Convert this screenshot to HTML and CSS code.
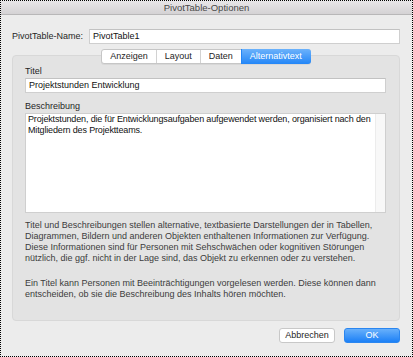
FILE: index.html
```html
<!DOCTYPE html>
<html>

<head>
    <title>PivotTable-Optionen</title>
    <link rel="stylesheet" href="styles.css">
</head>

<body>
    <div class="window">
        <div class="titlebar">PivotTable-Optionen</div>
        <div class="content">
            <div class="name-row">
                <span class="label">PivotTable-Name:</span>
                <div class="field name-field">PivotTable1</div>
            </div>

            <div class="tabs">
                <span class="tab">Anzeigen</span>
                <span class="tab">Layout</span>
                <span class="tab">Daten</span>
                <span class="tab active">Alternativtext</span>
            </div>

            <div class="panel">
                <div class="label">Titel</div>
                <div class="field title-field">Projektstunden Entwicklung</div>

                <div class="label desc-label">Beschreibung</div>
                <div class="textarea">
                    <div class="textarea-text">Projektstunden, die für Entwicklungsaufgaben aufgewendet werden, organisiert nach den Mitgliedern des Projektteams.</div>
                    <div class="scroll-track"></div>
                </div>

                <p class="hint">Titel und Beschreibungen stellen alternative, textbasierte Darstellungen der in Tabellen, Diagrammen, Bildern und anderen Objekten enthaltenen Informationen zur Verfügung. Diese Informationen sind für Personen mit Sehschwächen oder kognitiven Störungen nützlich, die ggf. nicht in der Lage sind, das Objekt zu erkennen oder zu verstehen.</p>
                <p class="hint second">Ein Titel kann Personen mit Beeinträchtigungen vorgelesen werden. Diese können dann entscheiden, ob sie die Beschreibung des Inhalts hören möchten.</p>
            </div>

            <div class="buttons">
                <button class="btn">Abbrechen</button>
                <button class="btn primary">OK</button>
            </div>
        </div>
    </div>
</body>

</html>
```

FILE: styles.css
```css
body {
    margin: 0;
    font-family: 'Liberation Sans', Arial, sans-serif;
    font-size: 9px;
    color: #262626;
}

.window {
    width: 413px;
    height: 357px;
    box-sizing: border-box;
    border: 1px dotted #000;
    background-color: #ececec;
}

.titlebar {
    height: 13px;
    line-height: 13px;
    text-align: center;
    font-size: 9.5px;
    color: #4a4a4a;
    background: linear-gradient(#e8e6e8, #d4d2d4);
    border-bottom: 1px solid #b8b7b8;
}

.content {
    padding: 0 12px 0 11px;
}

/* name row */
.name-row {
    display: flex;
    align-items: center;
    gap: 6px;
    margin-top: 14px;
}

.label {
    line-height: 11px;
    color: #262626;
}

.field {
    height: 15px;
    line-height: 13px;
    box-sizing: border-box;
    padding: 0 3px;
    background-color: #fff;
    border: 1px solid #cfcfcf;
    border-top-color: #c2c2c2;
    color: #111;
}

.name-field {
    flex: 1;
}

/* segmented tabs */
.tabs {
    position: relative;
    z-index: 1;
    display: flex;
    width: max-content;
    height: 15px;
    margin: 5px auto -9px;
    box-sizing: border-box;
    background-color: #fff;
    border: 1px solid #c6c6c6;
    border-radius: 3px;
    box-shadow: 0 1px 0 rgba(0, 0, 0, 0.05);
}

.tab {
    padding: 0 8px;
    line-height: 13px;
    color: #1e1e1e;
    border-left: 1px solid #d2d2d2;
}

.tab:first-child {
    border-left: none;
}

.tab.active {
    color: #fff;
    background: linear-gradient(#6cb2fb, #2386f7);
    border-left-color: #2386f7;
    margin: -1px -1px -1px 0;
    padding: 1px 9px 1px 8px;
    border-radius: 0 3px 3px 0;
}

/* tab panel */
.panel {
    padding: 10px 13px 20px 12px;
    background-color: #e3e3e3;
    border: 1px solid #d8d8d8;
    border-radius: 4px;
}

.panel .label {
    margin-bottom: 1px;
}

.desc-label {
    margin-top: 8px;
}

.textarea {
    display: flex;
    height: 100px;
    box-sizing: border-box;
    background-color: #fff;
    border: 1px solid #cfcfcf;
}

.textarea-text {
    flex: 1;
    padding: 0 0 0 2px;
    line-height: 11px;
    letter-spacing: -0.15px;
    color: #111;
}

.scroll-track {
    width: 9px;
    background-color: #f8f8f8;
    border-left: 1px solid #ececec;
}

.hint {
    margin: 7px 0 0;
    line-height: 11px;
    color: #3c3c3c;
}

.hint.second {
    margin-top: 14px;
}

/* dialog buttons */
.buttons {
    display: flex;
    justify-content: flex-end;
    gap: 9px;
    margin-top: 7px;
}

.btn {
    width: 56px;
    height: 15px;
    padding: 0;
    font-family: inherit;
    font-size: 9px;
    line-height: 13px;
    color: #1e1e1e;
    background-color: #fff;
    border: 1px solid #c8c8c8;
    border-radius: 3px;
}

.btn.primary {
    color: #fff;
    background: linear-gradient(#68b0fb, #1c80f6);
    border-color: #2a86f0;
}
```
